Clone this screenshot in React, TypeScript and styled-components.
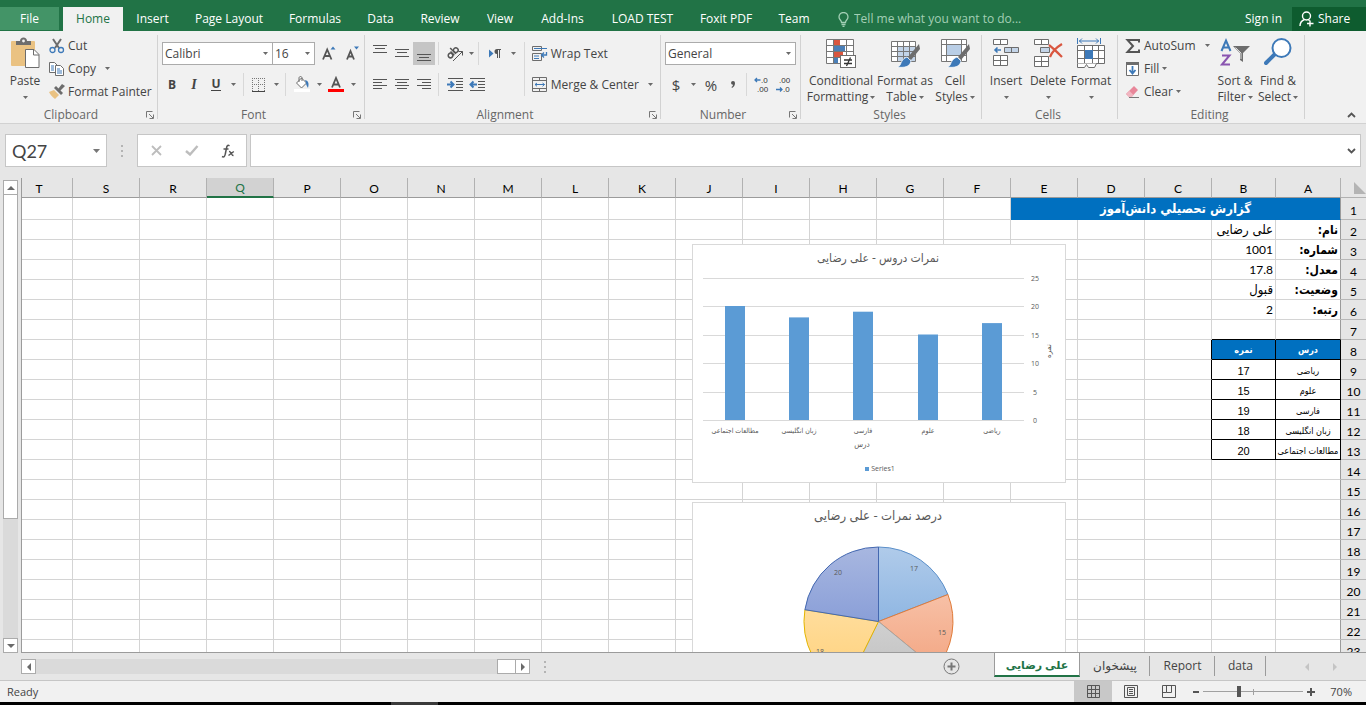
import React from "react";
import styled, { createGlobalStyle, css } from "styled-components";

const UI = `"Open Sans", "DejaVu Sans", sans-serif`;
const CELL = `Lato, "DejaVu Sans", sans-serif`;
const FA = `"DejaVu Sans Condensed", "DejaVu Sans", sans-serif`;

const Global = createGlobalStyle`
  * { box-sizing: border-box; }
  html, body { margin: 0; padding: 0; }
  body { background: #e6e6e6; font-family: ${UI}; font-size: 12px; line-height: 16px; color: #444; }
  button, input, select { font: inherit; color: inherit; margin: 0; padding: 0; border: 0; background: none; border-radius: 0; outline: none; }
  button { cursor: pointer; }
`;

const Window = styled.div`
  display: flex;
  flex-direction: column;
  height: 100vh;
  overflow: hidden;
`;

const Drawing = styled.svg`
  display: block;
  flex: none;
`;

/* ---------- Title tabs ---------- */

const TabBar = styled.nav`
  display: flex;
  align-items: flex-end;
  height: 31px;
  flex: none;
  background: #217346;
  color: #fff;
  font-size: 12px;
`;

const RibbonTab = styled.button<{ $w: number; $active?: boolean }>`
  width: ${(p) => p.$w}px;
  height: 24px;
  white-space: nowrap;
  ${(p) => p.$active && css`
    background: #f1f1f1;
    color: #217346;
    margin-left: 4px;
  `}
`;

const FileTab = styled(RibbonTab)`
  background: #439467;
  margin-bottom: 1px;
  height: 23px;
`;

const TellMe = styled.label`
  display: flex;
  align-items: center;
  gap: 5px;
  flex: 1;
  height: 24px;
  padding-left: 15px;
  color: #a3cfb5;
`;

const TellMeInput = styled.input`
  width: 180px;
  &::placeholder { color: #a3cfb5; opacity: 1; }
`;

const SignIn = styled.button`
  height: 24px;
  padding: 0 10px;
  white-space: nowrap;
`;

const Share = styled.button`
  display: flex;
  align-items: center;
  gap: 4px;
  width: 74px;
  height: 24px;
  padding-left: 7px;
  background: #0e5c2f;
`;

/* ---------- Ribbon ---------- */

const Ribbon = styled.div`
  display: flex;
  flex: none;
  height: 93px;
  background: #f1f1f1;
  border-bottom: 1px solid #d2d2d2;
`;

const Group = styled.section<{ $w: number }>`
  display: flex;
  flex-direction: column;
  flex: none;
  width: ${(p) => p.$w}px;
  position: relative;
  &::after {
    content: "";
    position: absolute;
    right: 0;
    top: 4px;
    bottom: 4px;
    width: 1px;
    background: #d2d2d2;
  }
`;

const GroupBody = styled.div<{ $left?: number }>`
  display: flex;
  flex: 1;
  padding-left: ${(p) => p.$left ?? 4}px;
`;

const GroupFooter = styled.div`
  display: flex;
  align-items: center;
  height: 16px;
  padding-right: 4px;
  text-align: center;
  color: #666;
`;

const GroupName = styled.span`
  flex: 1;
`;

const Launcher = styled.button`
  width: 8px;
  height: 9px;
  margin-left: 4px;
`;

const RibbonRest = styled.div`
  display: flex;
  flex: 1;
  justify-content: flex-end;
  align-items: flex-end;
  padding: 0 10px 5px 0;
`;

const BigButton = styled.button<{ $w: number }>`
  display: flex;
  flex-direction: column;
  align-items: center;
  width: ${(p) => p.$w}px;
  height: 68px;
  margin-top: 6px;
  white-space: nowrap;
  line-height: 16px;
`;

const BigIcon = styled.span`
  display: flex;
  justify-content: center;
  align-items: flex-start;
  height: 36px;
`;

const BigLine = styled.span`
  display: flex;
  align-items: center;
  justify-content: center;
  gap: 2px;
  height: 16px;
`;

const SmallColumn = styled.div<{ $w?: number; $gap?: number }>`
  display: flex;
  flex-direction: column;
  margin-top: 3px;
  margin-left: ${(p) => p.$gap ?? 0}px;
  ${(p) => p.$w && `width: ${p.$w}px;`}
`;

const SmallButton = styled.button`
  display: flex;
  align-items: center;
  height: 23px;
  gap: 3px;
  white-space: nowrap;
`;

const CaretSlot = styled.span<{ $left: number }>`
  margin-left: ${(p) => p.$left}px;
`;

const Rows = styled.div`
  display: flex;
  flex-direction: column;
  gap: 8px;
  padding-top: 11px;
`;

const Row = styled.div`
  display: flex;
  align-items: center;
  height: 23px;
`;

const Tool = styled.button<{ $w?: number; $on?: boolean }>`
  display: flex;
  align-items: center;
  justify-content: center;
  width: ${(p) => p.$w ?? 22}px;
  height: 23px;
  font-size: 13px;
  background: ${(p) => (p.$on ? "#c5c5c5" : "transparent")};
`;

const Letter = styled.span<{ $kind: "b" | "i" | "u" }>`
  font-weight: 700;
  font-size: 12px;
  ${(p) => p.$kind === "i" && `font-style: italic; font-family: "Liberation Serif", serif; font-size: 14px;`}
  ${(p) => p.$kind === "u" && `border-bottom: 1px solid #444; line-height: 12px;`}
`;

const Symbol = styled.span`
  font-size: 15px;
  font-weight: 400;
  color: #444;
`;

const Divider = styled.span<{ $tall?: boolean }>`
  width: 1px;
  height: ${(p) => (p.$tall ? 54 : 23)}px;
  margin: ${(p) => (p.$tall ? "11px 7px 0 0" : "0 4px 0 3px")};
  background: #d8d8d8;
`;

const Picker = styled.span<{ $w: number }>`
  display: grid;
  align-items: center;
  width: ${(p) => p.$w}px;
  height: 23px;
  background: #fff;
  border: 1px solid #ababab;
  & + & { border-left: 0; }
  > * { grid-area: 1 / 1; }
  > svg { justify-self: end; margin-right: 4px; pointer-events: none; }
`;

const PickerSelect = styled.select`
  appearance: none;
  width: 100%;
  height: 100%;
  padding-left: 2px;
`;

/* ---------- Formula bar ---------- */

const FormulaBar = styled.div`
  display: flex;
  flex: none;
  height: 54px;
  padding: 10px 5px 11px;
`;

const NameBox = styled.label`
  display: flex;
  align-items: center;
  width: 102px;
  height: 33px;
  padding: 0 6px;
  background: #fff;
  border: 1px solid #c6c6c6;
`;

const NameInput = styled.input`
  flex: 1;
  min-width: 0;
  font-family: ${CELL};
  font-size: 18px;
  line-height: 24px;
`;

const Grip = styled.span`
  display: flex;
  align-items: center;
  justify-content: center;
  width: 30px;
`;

const EntryTools = styled.div`
  display: flex;
  align-items: center;
  width: 110px;
  height: 33px;
  background: #fff;
  border: 1px solid #c6c6c6;
  margin-right: 3px;
`;

const EntryButton = styled.button`
  display: flex;
  flex: 1;
  justify-content: center;
`;

const FormulaBox = styled.label`
  display: flex;
  flex: 1;
  align-items: center;
  height: 33px;
  padding-right: 4px;
  background: #fff;
  border: 1px solid #c6c6c6;
`;

const FormulaInput = styled.input`
  flex: 1;
  height: 31px;
  padding-left: 6px;
`;

/* ---------- Worksheet ---------- */

const SheetArea = styled.main`
  display: flex;
  flex: 1;
  min-height: 0;
`;

const VScroll = styled.div`
  display: flex;
  flex-direction: column;
  flex: none;
  width: 15px;
  margin: 2px 3px 0 3px;
  background: #dadada;
`;

const ScrollButton = styled.button`
  display: flex;
  flex: none;
  align-items: center;
  justify-content: center;
  width: 15px;
  height: 15px;
  background: #fff;
  border: 1px solid #ababab;
`;

const VThumb = styled.div`
  flex: 324;
  background: #fff;
  border: 1px solid #ababab;
  border-top: 0;
`;

const VTrack = styled.div`
  flex: 120;
`;

const Canvas = styled.div`
  position: relative;
  flex: 1;
  min-width: 0;
  overflow: hidden;
  border-bottom: 1px solid #9b9b9b;
`;

const Grid = styled.table`
  width: 100%;
  table-layout: fixed;
  border-collapse: separate;
  border-spacing: 0;
  font-family: ${CELL};
  font-size: 12px;
  line-height: 14px;
  color: #000;
  border-left: 1px solid #9b9b9b;
`;

const ColHead = styled.th<{ $sel?: boolean; $cut?: boolean }>`
  height: 20px;
  padding: ${(p) => (p.$cut ? "2px 16px 0 0" : "2px 0 0")};
  font-weight: 400;
  font-size: 12px;
  background: ${(p) => (p.$sel ? "#d2d2d2" : "#e6e6e6")};
  color: ${(p) => (p.$sel ? "#217346" : "#000")};
  border-right: 1px solid #b1b1b1;
  border-bottom: ${(p) => (p.$sel ? "2px solid #217346" : "1px solid #9b9b9b")};
`;

const Corner = styled.th`
  padding: 0 0 0 3px;
  background: #e6e6e6;
  border-bottom: 1px solid #b1b1b1;
`;

const RowHead = styled.th`
  padding: 4px 0 0;
  font-weight: 400;
  background: #e6e6e6;
  border-bottom: 1px solid #b8b8b8;
`;

const Cell = styled.td<{ $first?: boolean; $edge?: "all" | "right" | "bottom"; $kind?: string }>`
  height: 20px;
  padding: 0 2px;
  background: #fff;
  border-right: 1px solid ${(p) => (p.$edge === "all" || p.$edge === "right" ? "#000" : p.$first ? "#9b9b9b" : "#d4d4d4")};
  border-bottom: 1px solid ${(p) => (p.$edge === "all" || p.$edge === "bottom" ? "#000" : "#d4d4d4")};
  text-align: right;
  white-space: nowrap;
  overflow: hidden;
  ${(p) => p.$kind === "title" && css`
    height: 22px;
    background: #0070c0;
    border-bottom-color: #0070c0;
    color: #fff;
    text-align: center;
    font: 700 13px/18px ${FA};
  `}
  ${(p) => p.$kind === "label" && css`font: 700 12px/16px ${FA};`}
  ${(p) => p.$kind === "text" && css`font: 400 13px/16px ${FA};`}
  ${(p) => p.$kind === "head" && css`
    background: #0070c0;
    color: #fff;
    text-align: center;
    font: 700 9px/14px ${FA};
  `}
  ${(p) => p.$kind === "course" && css`
    padding: 2px 0 0;
    text-align: center;
    font: 400 9px/14px ${FA};
  `}
  ${(p) => p.$kind === "grade" && css`
    padding-top: 2px;
    text-align: center;
    font: 400 11px/14px "Liberation Sans", Arial, sans-serif;
  `}
`;

const ChartFrame = styled.figure<{ $top: number }>`
  position: absolute;
  right: 300px;
  top: ${(p) => p.$top}px;
  margin: 0;
  background: #fff;
  border: 1px solid #d9d9d9;
`;

/* ---------- Bottom bars ---------- */

const SheetBar = styled.div`
  display: flex;
  flex: none;
  height: 28px;
  padding-left: 21px;
  border-bottom: 1px solid #c6c6c6;
`;

const HScroll = styled.div`
  display: flex;
  width: 509px;
  height: 15px;
  margin-top: 6px;
  background: #dadada;
`;

const HThumb = styled.div`
  width: 18px;
  margin-left: auto;
  background: #fff;
  border: 1px solid #ababab;
  border-right: 0;
`;

const Filler = styled.span`
  flex: 1;
`;

const AddSheet = styled.button`
  display: flex;
  align-items: center;
  margin-right: 34px;
`;

const SheetTab = styled.button<{ $w: number; $active?: boolean }>`
  width: ${(p) => p.$w}px;
  height: 24px;
  padding-top: 2px;
  font-size: 12px;
  line-height: 16px;
  position: relative;
  ${(p) => p.$active
    ? css`
        background: #fff;
        color: #217346;
        font-weight: 700;
        font-size: 11px;
        border-left: 1px solid #9b9b9b;
        border-right: 1px solid #9b9b9b;
        border-bottom: 2px solid #217346;
      `
    : css`
        &::after {
          content: "";
          position: absolute;
          right: 0;
          top: 3px;
          bottom: 1px;
          width: 1px;
          background: #9b9b9b;
        }
      `}
`;

const SheetNav = styled.div`
  display: flex;
  width: 100px;
  padding-left: 37px;
  gap: 20px;
  align-items: center;
`;

const StatusBar = styled.footer`
  display: flex;
  align-items: center;
  flex: none;
  height: 21px;
  padding: 0 14px 0 7px;
  background: #f1f1f1;
  font-size: 11px;
`;

const ViewButton = styled.button<{ $on?: boolean }>`
  display: flex;
  align-items: center;
  justify-content: center;
  width: 38px;
  height: 21px;
  background: ${(p) => (p.$on ? "#c8c8c8" : "transparent")};
`;

const ZoomStep = styled.button`
  display: flex;
  align-items: center;
  justify-content: center;
  width: 15px;
  height: 21px;
`;

const ZoomSlider = styled.input`
  appearance: none;
  width: 100px;
  height: 12px;
  background:
    linear-gradient(#a0a0a0, #a0a0a0) 50px 50% / 1px 6px no-repeat,
    linear-gradient(#a0a0a0, #a0a0a0) 0 50% / 100% 1px no-repeat;
  &::-webkit-slider-thumb {
    appearance: none;
    width: 4px;
    height: 11px;
    background: #555;
  }
`;

const ZoomValue = styled.span`
  width: 34px;
  text-align: right;
`;

const Taskbar = styled.div`
  flex: none;
  height: 3px;
  padding-left: 391px;
  background: #000;
`;

const TaskHighlight = styled.div`
  width: 47px;
  height: 3px;
  background: #3a3a3a;
`;

/* ---------- Icons ---------- */

const Caret = ({ c = "#6a6a6a" }: { c?: string }) => (
  <Drawing width="5" height="3" viewBox="0 0 5 3"><path d="M0 0h5L2.5 3z" fill={c} /></Drawing>
);

const LauncherIcon = () => (
  <Drawing width="8" height="8" viewBox="0 0 8 8" fill="none" stroke="#777"><path d="M.5 6.500V.5H6.500M3 3l4 4M7.500 3.500v4h-4" /></Drawing>
);

const PasteIcon = () => (
  <Drawing width="30" height="32" viewBox="-1 -1 30 32">
    <rect x="0" y="3" width="24" height="25" rx="1" fill="#eac282" />
    <path d="M5 3h4c0-2 1.500-3.500 3.500-3.500S16 1 16 3h4v4H5z" fill="#6d6d6d" />
    <circle cx="12.500" cy="3" r="1.400" fill="#f1f1f1" />
    <path d="M14.500 11.500h8.500l5 5v13h-13.500z" fill="#fff" stroke="#6d6d6d" />
    <path d="M22.500 11.500v5.500h5.500" fill="none" stroke="#6d6d6d" />
  </Drawing>
);

const CutIcon = () => (
  <Drawing width="16" height="16" viewBox="0 0 16 16" fill="none">
    <path d="M4 1l6 9M12 1L6 10" stroke="#6d6d6d" strokeWidth="2" />
    <circle cx="3.500" cy="12" r="2.500" stroke="#3d79b8" strokeWidth="1.300" />
    <circle cx="12" cy="12" r="2.500" stroke="#3d79b8" strokeWidth="1.300" />
  </Drawing>
);

const CopyIcon = () => (
  <Drawing width="16" height="16" viewBox="0 0 16 16" stroke="#6d6d6d" fill="#fff">
    <path d="M.5 1.500h5l3 3v7h-8z" />
    <path d="M2 5h3M2 7h3M2 9h3" stroke="#3d79b8" />
    <path d="M6.500 4.500h5l3 3v7h-8z" />
    <path d="M8 8h3M8 10h5M8 12h5" stroke="#3d79b8" />
  </Drawing>
);

const PainterIcon = () => (
  <Drawing width="16" height="16" viewBox="0 0 16 16">
    <path d="M0 8l5-2 5 5-4 4C3 13 1 10 0 8z" fill="#eac282" />
    <path d="M5 4l2-2 7 7-2 2z" fill="#6d6d6d" />
    <path d="M9 5l4-5 3 2-5 5z" fill="#6d6d6d" />
  </Drawing>
);

const GrowIcon = ({ down }: { down?: boolean }) => (
  <Drawing width="15" height="15" viewBox="0 0 15 15">
    <path d={down ? "M2 13.500L5.500 5 9 13.500M3.300 10.500h4.400" : "M1 13.500L5.200 3.500 9.500 13.500M2.500 10h5.500"} fill="none" stroke="#555" strokeWidth="1.800" />
    <path d={down ? "M9 0.500h5L11.500 3.500z" : "M8.500 3.500h5L11 .5z"} fill="#3d79b8" />
  </Drawing>
);

const BorderIcon = () => (
  <Drawing width="14" height="14" viewBox="0 0 14 14" fill="none" stroke="#777">
    <path d="M0 .5h13M0 6.500h13M.5 0v13M6.500 0v13M12.500 0v13" strokeDasharray="1 1" />
    <path d="M0 13.500h13" stroke="#444" />
  </Drawing>
);

const FillIcon = () => (
  <Drawing width="16" height="17" viewBox="0 0 16 17">
    <path d="M2.500 7l5-5 5 5-5 5z" fill="#fff" stroke="#6d6d6d" />
    <path d="M5 6V2c0-2 3-2 3 0v3" fill="none" stroke="#6d6d6d" />
    <path d="M11 4c4 1 4 4 3 8-1-2-2-3-2-5z" fill="#3d79b8" />
    <rect x="0" y="13" width="16" height="3" fill="#fff" />
  </Drawing>
);

const FontColorIcon = () => (
  <Drawing width="16" height="17" viewBox="0 0 16 17">
    <path d="M4 11.500L8 2l4 9.500M5.500 8.500h5" fill="none" stroke="#555" strokeWidth="1.800" />
    <rect x="0" y="13" width="16" height="3" fill="#f00" />
  </Drawing>
);

const LinesIcon = ({ lines }: { lines: [number, number, number][] }) => (
  <Drawing width="14" height="17" viewBox="0 0 14 17" stroke="#555">
    {lines.map(([x, y, w]) => <path key={y} d={`M${x} ${y + 0.5}h${w}`} />)}
  </Drawing>
);

const OrientIcon = () => (
  <Drawing width="17" height="16" viewBox="0 0 17 16" fill="none" stroke="#555">
    <g transform="rotate(-45 6 7)" strokeWidth="1.500">
      <circle cx="2.500" cy="7" r="2.300" /><path d="M5.300 4.200v5.300" />
      <circle cx="10" cy="7" r="2.300" /><path d="M7.500 1.500v8" />
    </g>
    <path d="M6 15L15.500 5.500M11.500 5.500h4v4" />
  </Drawing>
);

const DirectionIcon = () => (
  <Drawing width="14" height="12" viewBox="0 0 14 12">
    <path d="M1 1.500v8L5.500 5.500z" fill="#3d79b8" />
    <path d="M13 1H9a2.500 2.500 0 000 5V10h1V2h1v8h1V2h1z" fill="#555" />
  </Drawing>
);

const IndentIcon = ({ out }: { out?: boolean }) => (
  <Drawing width="16" height="14" viewBox="0 0 16 14" fill="none">
    <path d="M1 .5h15M9 3.500h7M9 6.500h7M9 9.500h7M1 12.500h15" stroke="#555" />
    <path d={out ? "M8 6.500H2M4.500 3.500l-3 3 3 3" : "M0 6.500h6M3.500 3.500l3 3-3 3"} stroke="#3d79b8" strokeWidth="2" />
  </Drawing>
);

const WrapIcon = () => (
  <Drawing width="16" height="16" viewBox="0 0 16 16" fill="none" stroke="#6d6d6d">
    <path d="M.5 .5h9v4h-9zM.5 7.500h9v7h-9z" />
    <path d="M2 2.500h13M2 10h5M2 12.500h5" stroke="#3d79b8" />
    <path d="M14.500 6v3h-5M12 6.500L9.500 9l2.500 2.500" stroke="#3d79b8" strokeWidth="1.300" />
  </Drawing>
);

const MergeIcon = () => (
  <Drawing width="16" height="16" viewBox="0 0 16 16" fill="none" stroke="#6d6d6d">
    <path d="M.5 .5h14v14H.5zM.5 3.500h14M.5 11.500h14M7.500 .5v3M7.500 11.500v3" />
    <path d="M3 7.500h9.500M5 6L3 7.500l2 1.800M10.500 6l2 1.500-2 1.800" stroke="#3d79b8" />
  </Drawing>
);

const DecimalText = styled.text`
  font: 400 8px "Liberation Sans", Arial, sans-serif;
  fill: #333;
`;

const DecimalIcon = ({ less }: { less?: boolean }) => (
  <Drawing width="18" height="21" viewBox="0 0 18 21">
    <DecimalText x={less ? 4 : 8} y="9">{less ? ".00" : ".0"}</DecimalText>
    <DecimalText x={less ? 8 : 4} y="18">{less ? ".0" : ".00"}</DecimalText>
    <path d={less ? "M1 15.500h6M5 13.500l2 2-2 2" : "M7.500 6H2M4 4L2 6l2 2"} fill="none" stroke="#3d79b8" strokeWidth="1.300" />
  </Drawing>
);

const CondIcon = () => (
  <Drawing width="30" height="32" viewBox="0 0 30 32">
    <path d="M.5 2.500h27v24H.5z" fill="#fff" />
    <path d="M8 3h6v5H8zM8 15h9v5H8z" fill="#d9563f" />
    <path d="M8 9h11v5H8zM8 21h4v5H8z" fill="#4a7fb8" />
    <path d="M.5 2.500h27v24H.5zM.5 8.500h27M.5 14.500h27M.5 20.500h27M7.500 2.500v24M20.500 2.500v24" fill="none" stroke="#777" />
    <rect x="14.500" y="18.500" width="15" height="12" fill="#fff" stroke="#6d6d6d" />
    <path d="M18 23h8M18 26.500h8M24.500 20.500l-4 8.500" stroke="#333" strokeWidth="1.300" />
  </Drawing>
);

const Brush = () => (
  <>
    <path d="M29 7l1 5-9 11-3-3z" fill="#6d6d6d" />
    <path d="M17 20l4 4c-1 6-7 7-14 6 4-1 3-3 5-6 1-2 3-3 5-4z" fill="#3d79b8" stroke="#fff" strokeWidth=".7" />
  </>
);

const TableIcon = () => (
  <Drawing width="31" height="32" viewBox="0 0 31 32">
    <path d="M1.500 4.500h24v20h-24z" fill="#fff" />
    <path d="M8 10h17.500v14.500H8z" fill="#c3d4e8" />
    <path d="M1.500 4.500h24v20h-24zM1.500 9.500h24M1.500 14.500h24M1.500 19.500h24M7.500 4.500v20M13.500 4.500v20M19.500 4.500v20" fill="none" stroke="#777" />
    <Brush />
  </Drawing>
);

const StylesIcon = () => (
  <Drawing width="31" height="32" viewBox="0 0 31 32">
    <path d="M1.500 2.500h25v22h-25z" fill="#fff" />
    <path d="M7 8h14v10H7z" fill="#b9cee6" />
    <path d="M1.500 2.500h25v22h-25zM1.500 7.500h25M1.500 18.500h25M6.500 2.500v22M21.500 2.500v22" fill="none" stroke="#777" />
    <Brush />
  </Drawing>
);

const InsertIcon = () => (
  <Drawing width="28" height="32" viewBox="0 0 28 32" fill="#fff" stroke="#6d6d6d">
    <path d="M1.500 2.500h14v5h-14zM8.500 2.500v5M1.500 18.500h14v10h-14zM1.500 23.500h14M8.500 18.500v10" />
    <path d="M12.500 10.500h14v5h-14zM19.500 10.500v5" fill="#c3d4e8" />
    <path d="M9 13H3M5.500 10.500L3 13l2.500 2.500" stroke="#3d79b8" strokeWidth="1.600" fill="none" />
  </Drawing>
);

const DeleteIcon = () => (
  <Drawing width="30" height="32" viewBox="0 0 30 32" fill="#fff" stroke="#6d6d6d">
    <path d="M1.500 2.500h14v5h-14zM8.500 2.500v5M1.500 19.500h14v10h-14zM1.500 24.500h14M8.500 19.500v10" />
    <path d="M7.500 10.500h9v5h-9z" fill="#c3d4e8" />
    <path d="M16 8c4 3 9 8 13 12M29 7c-5 3-10 8-12 13" stroke="#d9563f" strokeWidth="2.200" fill="none" />
  </Drawing>
);

const FormatIcon = () => (
  <Drawing width="30" height="32" viewBox="0 0 30 32" fill="#fff" stroke="#6d6d6d">
    <path d="M1.500 8.500h27v18h-27zM1.500 13.500h27M1.500 21.500h27M8.500 8.500v18M16.500 8.500v18M22.500 8.500v18" />
    <path d="M1.500 26.500v4h7l2-3 2 3h6l2-4" />
    <path d="M9 13h8v9H9z" fill="#3d79b8" stroke="none" />
    <path d="M1.500 1v6M24.500 1v6M3 4h20M6 1.500L3.500 4 6 6.500M20 1.500L22.500 4 20 6.500" stroke="#3d79b8" fill="none" />
  </Drawing>
);

const SumIcon = () => (
  <Drawing width="16" height="16" viewBox="0 0 16 16" fill="none" stroke="#555" strokeWidth="2">
    <path d="M14 4.500V2H2.500L8 8l-5.500 6H14v-2.500" />
  </Drawing>
);

const FillDownIcon = () => (
  <Drawing width="16" height="16" viewBox="0 0 16 16" fill="none">
    <path d="M1.500 1.500h12v13h-12z" fill="#fff" stroke="#6d6d6d" />
    <path d="M1 1h13v3H1z" fill="#6d6d6d" />
    <path d="M7.500 5v7M4.500 9l3 3.500 3-3.500" stroke="#3d79b8" strokeWidth="1.800" />
  </Drawing>
);

const EraserIcon = () => (
  <Drawing width="16" height="16" viewBox="0 0 16 16">
    <path d="M1 10l8-8 4 4-6.500 7H4z" fill="#e8879a" />
    <path d="M1.500 9.500L4.500 7l4 4-2 2.500H4z" fill="#f1b6c1" />
    <path d="M4 13.500h10" stroke="#777" />
  </Drawing>
);

const SortIcon = () => (
  <Drawing width="30" height="32" viewBox="0 0 30 32" fill="none">
    <path d="M1.500 14L6 3.500 10.500 14M3 10.500h6" stroke="#3d79b8" strokeWidth="2" />
    <path d="M2 18.500h7.500L2 27.500h8" stroke="#8a55b0" strokeWidth="2" />
    <path d="M13 9h17l-7 7v9l-3-2v-7z" fill="#6d6d6d" />
    <path d="M15.500 10.500l5.500 5.500v6" stroke="#ddd" />
  </Drawing>
);

const FindIcon = () => (
  <Drawing width="28" height="32" viewBox="0 0 28 32" fill="none">
    <path d="M2 26l9-9" stroke="#3d79b8" strokeWidth="4" strokeLinecap="round" />
    <circle cx="17.500" cy="11" r="9" fill="#fff" stroke="#3d79b8" strokeWidth="2" />
  </Drawing>
);

const Chevron = ({ up }: { up?: boolean }) => (
  <Drawing width="9" height="6" viewBox="0 0 9 6" fill="none" stroke="#555" strokeWidth="1.800">
    <path d={up ? "M1 5l3.500-3.500L8 5" : "M1 1l3.500 3.500L8 1"} />
  </Drawing>
);

const Dots = () => (
  <Drawing width="2" height="12" viewBox="0 0 2 12" fill="#b4b4b4"><path d="M0 0h2v2H0zM0 5h2v2H0zM0 10h2v2H0z" /></Drawing>
);

const Arrow = ({ dir, c = "#6a6a6a" }: { dir: "up" | "down" | "left" | "right"; c?: string }) => {
  const shapes = { up: "M0 6l4-4 4 4z", down: "M0 2l4 4 4-4z", left: "M6 0L2 4l4 4z", right: "M2 0l4 4-4 4z" };
  return <Drawing width="8" height="8" viewBox="0 0 8 8"><path d={shapes[dir]} fill={c} /></Drawing>;
};

/* ---------- Charts ---------- */

const ChartText = styled.text<{ $size: number }>`
  font-family: "Open Sans", "DejaVu Sans Condensed", "DejaVu Sans", sans-serif;
  font-size: ${(p) => p.$size}px;
  fill: #595959;
  text-anchor: middle;
`;

const gradeBars = [
  { name: "مطالعات اجتماعی", value: 20, x: 42 },
  { name: "زبان انگلیسی", value: 18, x: 106 },
  { name: "فارسی", value: 19, x: 170 },
  { name: "علوم", value: 15, x: 235 },
  { name: "ریاضی", value: 17, x: 299 },
];

const BarChart = () => (
  <Drawing width="372" height="237" viewBox="0 0 372 237" role="img" aria-label="نمرات دروس">
    <ChartText $size={12} x="185" y="17">نمرات دروس - علی رضایی</ChartText>
    {[0, 5, 10, 15, 20, 25].map((v) => {
      const y = Math.round(175 - v * 5.7);
      return (
        <g key={v}>
          <path d={`M10 ${y + 0.5}h321`} stroke="#d9d9d9" />
          <ChartText $size={7} x="342" y={y + 3}>{v}</ChartText>
        </g>
      );
    })}
    {gradeBars.map((b) => (
      <g key={b.name}>
        <rect x={b.x - 10} y={175 - b.value * 5.7} width="20" height={b.value * 5.7} fill="#5b9bd5" />
        <ChartText $size={7} x={b.x} y="188">{b.name}</ChartText>
      </g>
    ))}
    <ChartText $size={8} x="169" y="202">درس</ChartText>
    <ChartText $size={8} transform="translate(358 106) rotate(-90)">نمره</ChartText>
    <rect x="172" y="222" width="4" height="4" fill="#5b9bd5" />
    <ChartText $size={7} x="190" y="226">Series1</ChartText>
  </Drawing>
);

const slices = [
  { value: 17, from: "#b0cbea", to: "#8fb6e2", edge: "#5b8fc9", lx: 221, ly: 68 },
  { value: 15, from: "#f7c0a6", to: "#f3a683", edge: "#e07b39", lx: 249, ly: 132 },
  { value: 19, from: "#d0d0d0", to: "#bdbdbd", edge: "#a5a5a5", lx: 190, ly: 180 },
  { value: 18, from: "#ffdd9c", to: "#ffd078", edge: "#e3b500", lx: 127, ly: 151 },
  { value: 20, from: "#a8b7e0", to: "#8a9fd8", edge: "#4468b0", lx: 145, ly: 72 },
];

const PieChart = () => {
  const total = slices.reduce((s, p) => s + p.value, 0);
  const cx = 185.5, cy = 118.500, r = 74.500;
  let sum = 0;
  const point = (v: number) => {
    const a = (v / total) * Math.PI * 2;
    return `${(cx + r * Math.sin(a)).toFixed(1)} ${(cy - r * Math.cos(a)).toFixed(1)}`;
  };
  return (
    <Drawing width="372" height="237" viewBox="0 0 372 237" role="img" aria-label="درصد نمرات">
      <ChartText $size={13} x="185" y="17">درصد نمرات - علی رضایی</ChartText>
      {slices.map((s, i) => {
        const start = point(sum);
        sum += s.value;
        return (
          <g key={i}>
            <linearGradient id={`slice${i}`} x1="0" y1="0" x2="0" y2="1">
              <stop offset="0" stopColor={s.from} /><stop offset="1" stopColor={s.to} />
            </linearGradient>
            <path d={`M${cx} ${cy}L${start}A${r} ${r} 0 0 1 ${point(sum)}z`} fill={`url(#slice${i})`} stroke={s.edge} />
          </g>
        );
      })}
      {slices.map((s, i) => <ChartText key={i} $size={7} x={s.lx} y={s.ly}>{s.value}</ChartText>)}
    </Drawing>
  );
};

/* ---------- Sheet data ---------- */

const columns = "ABCDEFGHIJKLMNOPQRST".split("");

type Content = { a: string; b: string; ka: string; kb: string };
const content: Record<number, Content> = {
  2: { a: "نام:", b: "علی رضایی", ka: "label", kb: "text" },
  3: { a: "شماره:", b: "1001", ka: "label", kb: "num" },
  4: { a: "معدل:", b: "17.8", ka: "label", kb: "num" },
  5: { a: "وضعیت:", b: "قبول", ka: "label", kb: "text" },
  6: { a: "رتبه:", b: "2", ka: "label", kb: "num" },
  8: { a: "درس", b: "نمره", ka: "head", kb: "head" },
  9: { a: "ریاضی", b: "17", ka: "course", kb: "grade" },
  10: { a: "علوم", b: "15", ka: "course", kb: "grade" },
  11: { a: "فارسی", b: "19", ka: "course", kb: "grade" },
  12: { a: "زبان انگلیسی", b: "18", ka: "course", kb: "grade" },
  13: { a: "مطالعات اجتماعی", b: "20", ka: "course", kb: "grade" },
};

const SheetRow = ({ n }: { n: number }) => {
  const c = content[n];
  const boxed = n >= 8 && n <= 13;
  const edge = boxed ? "all" : n === 7 ? "bottom" : undefined;
  return (
    <tr>
      <RowHead scope="row">{n}</RowHead>
      {n === 1 ? (
        <Cell $kind="title" $first colSpan={5}>گزارش تحصيلي دانش‌آموز</Cell>
      ) : (
        <>
          <Cell $first $edge={edge} $kind={c?.ka}>{c?.a}</Cell>
          <Cell $edge={edge} $kind={c?.kb}>{c?.b}</Cell>
          <Cell $edge={boxed ? "right" : undefined} />
          <Cell />
          <Cell />
        </>
      )}
      {columns.slice(5).map((k) => <Cell key={k} />)}
    </tr>
  );
};

const tabs: [string, number][] = [
  ["Insert", 59], ["Page Layout", 94], ["Formulas", 78], ["Data", 53], ["Review", 66],
  ["View", 54], ["Add-Ins", 71], ["LOAD TEST", 89], ["Foxit PDF", 78], ["Team", 58],
];

const Big = ({ w, icon, top, bottom }: { w: number; icon: React.ReactNode; top: string; bottom?: string }) => (
  <BigButton $w={w}>
    <BigIcon>{icon}</BigIcon>
    <BigLine>{top}</BigLine>
    <BigLine>{bottom}<Caret /></BigLine>
  </BigButton>
);

const Footer = ({ name, launch }: { name: string; launch?: boolean }) => (
  <GroupFooter>
    <GroupName>{name}</GroupName>
    {launch && <Launcher aria-label={`${name} settings`}><LauncherIcon /></Launcher>}
  </GroupFooter>
);

export default function App() {
  return (
    <Window>
      <Global />
      <TabBar>
        <FileTab $w={59}>File</FileTab>
        <RibbonTab $w={60} $active>Home</RibbonTab>
        {tabs.map(([name, w]) => <RibbonTab key={name} $w={w}>{name}</RibbonTab>)}
        <TellMe>
          <Drawing width="11" height="15" viewBox="0 0 11 15" fill="none" stroke="#a3cfb5" strokeWidth="1.300">
            <path d="M3.500 10.500C3.500 8 1 8 1 5a4.500 4.500 0 019 0c0 3-2.500 3-2.500 5.500zM3.500 12.500h4M4.500 14.300h2" />
          </Drawing>
          <TellMeInput placeholder="Tell me what you want to do..." aria-label="Tell me what you want to do" />
        </TellMe>
        <SignIn>Sign in</SignIn>
        <Share>
          <Drawing width="15" height="16" viewBox="0 0 15 16" fill="none" stroke="#fff" strokeWidth="1.400">
            <circle cx="7.500" cy="5" r="4" /><path d="M1 15c0-3 2-5.500 4.500-6.500M9 8.500l1.500 1M11 9.500v6M8 12.500h6.500" />
          </Drawing>
          Share
        </Share>
      </TabBar>

      <Ribbon>
        <Group $w={158}>
          <GroupBody>
            <Big w={42} icon={<PasteIcon />} top="Paste" />
            <SmallColumn $w={104} $gap={3}>
              <SmallButton><CutIcon />Cut</SmallButton>
              <SmallButton><CopyIcon />Copy<CaretSlot $left={6}><Caret /></CaretSlot></SmallButton>
              <SmallButton><PainterIcon />Format Painter</SmallButton>
            </SmallColumn>
          </GroupBody>
          <Footer name="Clipboard" launch />
        </Group>

        <Group $w={207}>
          <GroupBody>
            <Rows>
              <Row>
                <Picker $w={111}>
                  <PickerSelect aria-label="Font"><option>Calibri</option></PickerSelect><Caret />
                </Picker>
                <Picker $w={42}>
                  <PickerSelect aria-label="Font size"><option>16</option></PickerSelect><Caret />
                </Picker>
                <Tool $w={28} aria-label="Increase font size"><GrowIcon /></Tool>
                <Tool $w={18} aria-label="Decrease font size"><GrowIcon down /></Tool>
              </Row>
              <Row>
                <Tool $w={20} aria-label="Bold"><Letter $kind="b">B</Letter></Tool>
                <Tool $w={24} aria-label="Italic"><Letter $kind="i">I</Letter></Tool>
                <Tool $w={20} aria-label="Underline"><Letter $kind="u">U</Letter></Tool>
                <Tool $w={14} aria-label="Underline styles"><Caret /></Tool>
                <Divider />
                <Tool $w={22} aria-label="Borders"><BorderIcon /></Tool>
                <Tool $w={12} aria-label="Border styles"><Caret /></Tool>
                <Divider />
                <Tool $w={24} aria-label="Fill color"><FillIcon /></Tool>
                <Tool $w={10} aria-label="Fill colors"><Caret /></Tool>
                <Tool $w={24} aria-label="Font color"><FontColorIcon /></Tool>
                <Tool $w={10} aria-label="Font colors"><Caret /></Tool>
              </Row>
            </Rows>
          </GroupBody>
          <Footer name="Font" launch />
        </Group>

        <Group $w={296}>
          <GroupBody>
            <Rows>
              <Row>
                <Tool aria-label="Top align"><LinesIcon lines={[[0, 0, 14], [2, 3, 10], [0, 7, 14]]} /></Tool>
                <Tool aria-label="Middle align"><LinesIcon lines={[[0, 4, 14], [2, 7, 10], [0, 11, 14]]} /></Tool>
                <Tool $on aria-label="Bottom align"><LinesIcon lines={[[0, 9, 14], [2, 12, 10], [0, 15, 14]]} /></Tool>
                <Divider />
                <Tool $w={24} aria-label="Orientation"><OrientIcon /></Tool>
                <Tool $w={8} aria-label="Orientation options"><Caret /></Tool>
                <Divider />
                <Tool $w={24} aria-label="Text direction"><DirectionIcon /></Tool>
                <Tool $w={12} aria-label="Text direction options"><Caret /></Tool>
              </Row>
              <Row>
                <Tool aria-label="Align left"><LinesIcon lines={[[0, 3, 14], [0, 6, 9], [0, 9, 14], [0, 12, 9]]} /></Tool>
                <Tool aria-label="Center"><LinesIcon lines={[[0, 3, 14], [2, 6, 10], [0, 9, 14], [2, 12, 10]]} /></Tool>
                <Tool aria-label="Align right"><LinesIcon lines={[[0, 3, 14], [5, 6, 9], [0, 9, 14], [5, 12, 9]]} /></Tool>
                <Divider />
                <Tool $w={24} aria-label="Decrease indent"><IndentIcon /></Tool>
                <Tool $w={20} aria-label="Increase indent"><IndentIcon out /></Tool>
              </Row>
            </Rows>
            <Filler />
            <Divider $tall />
            <Rows>
              <Row><SmallButton><WrapIcon />Wrap Text</SmallButton></Row>
              <Row>
                <SmallButton><MergeIcon />Merge &amp; Center</SmallButton>
                <Tool $w={22} aria-label="Merge options"><Caret /></Tool>
              </Row>
            </Rows>
          </GroupBody>
          <Footer name="Alignment" launch />
        </Group>

        <Group $w={140}>
          <GroupBody>
            <Rows>
              <Row>
                <Picker $w={131}>
                  <PickerSelect aria-label="Number format"><option>General</option></PickerSelect><Caret />
                </Picker>
              </Row>
              <Row>
                <Tool $w={22} aria-label="Currency"><Symbol>$</Symbol></Tool>
                <Tool $w={12} aria-label="Currency options"><Caret /></Tool>
                <Tool $w={24} aria-label="Percent"><Symbol>%</Symbol></Tool>
                <Tool $w={20} aria-label="Comma">
                  <Drawing width="5" height="8" viewBox="0 0 5 8"><path d="M0 2a2 2 0 014 0c0 2-1 4-3 5l-.5-1c1-.5 1.500-1.500 1.500-2.200A2 2 0 010 2z" fill="#555" /></Drawing>
                </Tool>
                <Divider />
                <Tool $w={22} aria-label="Increase decimal"><DecimalIcon /></Tool>
                <Tool $w={22} aria-label="Decrease decimal"><DecimalIcon less /></Tool>
              </Row>
            </Rows>
          </GroupBody>
          <Footer name="Number" launch />
        </Group>

        <Group $w={181}>
          <GroupBody $left={3}>
            <Big w={74} icon={<CondIcon />} top="Conditional" bottom="Formatting" />
            <Big w={54} icon={<TableIcon />} top="Format as" bottom="Table" />
            <Big w={46} icon={<StylesIcon />} top="Cell" bottom="Styles" />
          </GroupBody>
          <Footer name="Styles" />
        </Group>

        <Group $w={136}>
          <GroupBody $left={3}>
            <Big w={42} icon={<InsertIcon />} top="Insert" />
            <Big w={42} icon={<DeleteIcon />} top="Delete" />
            <Big w={44} icon={<FormatIcon />} top="Format" />
          </GroupBody>
          <Footer name="Cells" />
        </Group>

        <Group $w={187}>
          <GroupBody $left={7}>
            <SmallColumn $w={89}>
              <SmallButton><SumIcon />AutoSum<CaretSlot $left={6}><Caret /></CaretSlot></SmallButton>
              <SmallButton><FillDownIcon />Fill<Caret /></SmallButton>
              <SmallButton><EraserIcon />Clear<Caret /></SmallButton>
            </SmallColumn>
            <Big w={42} icon={<SortIcon />} top="Sort &amp;" bottom="Filter" />
            <Big w={44} icon={<FindIcon />} top="Find &amp;" bottom="Select" />
          </GroupBody>
          <Footer name="Editing" />
        </Group>
        <RibbonRest>
          <button aria-label="Collapse ribbon"><Chevron up /></button>
        </RibbonRest>
      </Ribbon>

      <FormulaBar>
        <NameBox>
          <NameInput defaultValue="Q27" aria-label="Name box" />
          <Drawing width="7" height="4" viewBox="0 0 7 4"><path d="M0 0h7L3.500 4z" fill="#777" /></Drawing>
        </NameBox>
        <Grip><Dots /></Grip>
        <EntryTools>
          <EntryButton aria-label="Cancel">
            <Drawing width="11" height="11" viewBox="0 0 11 11" stroke="#bdbdbd" strokeWidth="1.800"><path d="M1 1l9 9M10 1l-9 9" /></Drawing>
          </EntryButton>
          <EntryButton aria-label="Enter">
            <Drawing width="14" height="11" viewBox="0 0 14 11" fill="none" stroke="#bdbdbd" strokeWidth="2.400"><path d="M1 6l4 3.500L12.500 1" /></Drawing>
          </EntryButton>
          <EntryButton aria-label="Insert function">
            <Drawing width="14" height="14" viewBox="0 0 14 14" fill="none" stroke="#555" strokeWidth="1.500">
              <path d="M8.500 1.800C6.500 .5 5.800 2 5.300 5L4.300 10c-.4 2.500-1.500 3.500-3.300 2.500M2.500 5h5M8 7.500c2-.5 2 4 4.500 4M12.800 7.500L7.500 11.500" />
            </Drawing>
          </EntryButton>
        </EntryTools>
        <FormulaBox>
          <FormulaInput aria-label="Formula" />
          <Chevron />
        </FormulaBox>
      </FormulaBar>

      <SheetArea>
        <VScroll>
          <ScrollButton aria-label="Scroll up"><Arrow dir="up" /></ScrollButton>
          <VThumb />
          <VTrack />
          <ScrollButton aria-label="Scroll down"><Arrow dir="down" /></ScrollButton>
        </VScroll>
        <Canvas>
          <Grid dir="rtl">
            <colgroup>
              <col width={25} />
              <col width={65} />
              <col width={64} />
              {columns.slice(2, 19).map((c) => <col key={c} width={67} />)}
              <col />
            </colgroup>
            <thead>
              <tr>
                <Corner aria-label="Select all">
                  <Drawing width="12" height="12" viewBox="0 0 12 12"><path d="M0 0v12h12z" fill="#b4b4b4" /></Drawing>
                </Corner>
                {columns.map((c) => (
                  <ColHead key={c} scope="col" $sel={c === "Q"} $cut={c === "T"}>{c}</ColHead>
                ))}
              </tr>
            </thead>
            <tbody>
              {Array.from({ length: 23 }, (_, i) => <SheetRow key={i} n={i + 1} />)}
            </tbody>
          </Grid>
          <ChartFrame $top={66}><BarChart /></ChartFrame>
          <ChartFrame $top={324}><PieChart /></ChartFrame>
        </Canvas>
      </SheetArea>

      <SheetBar>
        <HScroll>
          <ScrollButton aria-label="Scroll left"><Arrow dir="left" /></ScrollButton>
          <HThumb />
          <ScrollButton aria-label="Scroll right"><Arrow dir="right" /></ScrollButton>
        </HScroll>
        <Grip><Dots /></Grip>
        <Filler />
        <AddSheet aria-label="New sheet">
          <Drawing width="17" height="17" viewBox="0 0 17 17" fill="none" stroke="#777">
            <circle cx="8.500" cy="8.500" r="7.500" /><path d="M4.500 8.500h8M8.500 4.500v8" strokeWidth="2" />
          </Drawing>
        </AddSheet>
        <SheetTab $w={86} $active>علی رضایی</SheetTab>
        <SheetTab $w={70}>پیشخوان</SheetTab>
        <SheetTab $w={65}>Report</SheetTab>
        <SheetTab $w={51}>data</SheetTab>
        <SheetNav>
          <Arrow dir="left" c="#c4c4c4" />
          <Arrow dir="right" c="#c4c4c4" />
        </SheetNav>
      </SheetBar>

      <StatusBar>
        Ready
        <Filler />
        <ViewButton $on aria-label="Normal view">
          <Drawing width="13" height="13" viewBox="0 0 13 13" fill="none" stroke="#555"><path d="M.5 .5h12v12H.5zM.5 4.500h12M.5 8.500h12M4.500 .5v12M8.500 .5v12" /></Drawing>
        </ViewButton>
        <ViewButton aria-label="Page layout view">
          <Drawing width="14" height="13" viewBox="0 0 14 13" fill="none" stroke="#555"><path d="M.5 .5h13v12H.5zM3.500 2.500h7v8h-7zM5 4.500h4M5 6.500h4M5 8.500h4" /></Drawing>
        </ViewButton>
        <ViewButton aria-label="Page break view">
          <Drawing width="14" height="13" viewBox="0 0 14 13" fill="none" stroke="#555"><path d="M.5 .5h13v12H.5zM4.500 .5v7h5v-7M.5 7.500h4" /></Drawing>
        </ViewButton>
        <ZoomStep aria-label="Zoom out"><Drawing width="8" height="2" viewBox="0 0 8 2"><path d="M1 0h6v2H1z" fill="#555" /></Drawing></ZoomStep>
        <ZoomSlider type="range" min="0" max="100" defaultValue="35" aria-label="Zoom" />
        <ZoomStep aria-label="Zoom in"><Drawing width="8" height="8" viewBox="0 0 8 8"><path d="M0 3h3V0h2v3h3v2H5v3H3V5H0z" fill="#555" /></Drawing></ZoomStep>
        <ZoomValue>70%</ZoomValue>
      </StatusBar>
      <Taskbar><TaskHighlight /></Taskbar>
    </Window>
  );
}
